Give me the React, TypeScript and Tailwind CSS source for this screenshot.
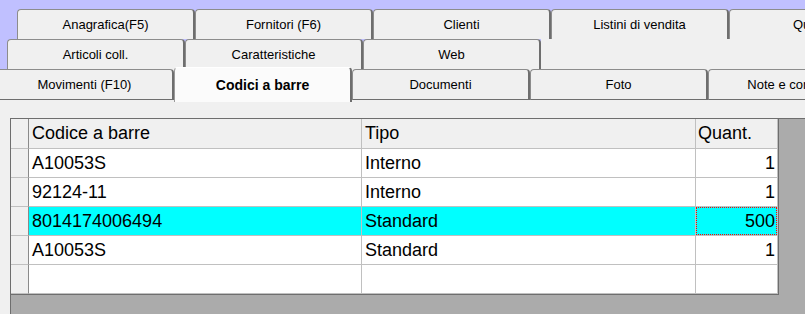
import React from 'react';

interface Riga {
  codice: string;
  tipo: string;
  quant: number;
  attiva?: boolean;
}

const RIGHE: Riga[] = [
  { codice: 'A10053S', tipo: 'Interno', quant: 1 },
  { codice: '92124-11', tipo: 'Interno', quant: 1 },
  { codice: '8014174006494', tipo: 'Standard', quant: 500, attiva: true },
  { codice: 'A10053S', tipo: 'Standard', quant: 1 },
];

const RIGA1 = ['Anagrafica(F5)', 'Fornitori (F6)', 'Clienti', 'Listini di vendita', 'Quantità'];
const RIGA2 = ['Articoli coll.', 'Caratteristiche', 'Web'];
const RIGA3 = ['Movimenti (F10)', 'Codici a barre', 'Documenti', 'Foto', 'Note e commenti'];

function Tab({ label, bottom }: { label: string; bottom?: boolean }) {
  return (
    <div
      className={
        'flex w-[178px] shrink-0 items-center justify-center rounded-t-[4px] border-t border-l border-r-2 border-t-[#8c8c8c] border-l-[#8c8c8c] border-r-[#6e6e6e] bg-[#f0f0f0] text-[13px] text-black ' +
        (bottom ? 'h-[31px] border-b border-b-[#6e6e6e]' : 'h-[30px]')
      }
    >
      <span className="whitespace-nowrap">{label}</span>
    </div>
  );
}

export default function App() {
  return (
    <div className="flex h-[314px] w-[805px] flex-col overflow-hidden bg-[#f0f0f0] font-['Liberation_Sans',Arial,sans-serif]">
      {/* Schede */}
      <div className="bg-[#c0c0ff] pt-[9px]">
        <div className="flex h-[30px] pl-[17px]">
          {RIGA1.map((t) => (
            <Tab key={t} label={t} />
          ))}
        </div>
        <div className="flex h-[30px] pl-[7px]">
          {RIGA2.map((t) => (
            <Tab key={t} label={t} />
          ))}
          <div className="h-[30px] flex-1 bg-[#f0f0f0]" />
        </div>
        <div className="-ml-[4px] flex h-[31px] bg-[#f0f0f0]">
          {RIGA3.map((t) =>
            t === 'Codici a barre' ? (
              <div
                key={t}
                className="relative z-10 -mt-[2px] flex h-[35px] w-[178px] shrink-0 items-start justify-center rounded-t-[4px] border-t border-l border-r-2 border-t-white border-l-[#9a9a9a] border-r-[#6e6e6e] bg-[#fbfbfb] pt-[7px] text-[14px] font-bold text-black"
              >
                {t}
              </div>
            ) : (
              <Tab key={t} label={t} bottom />
            ),
          )}
        </div>
      </div>

      {/* Griglia */}
      <div className="flex flex-1 pl-[10px] pt-[18px]">
        <div className="flex-1 border-t border-l border-[#6e6e6e] bg-[#ababab]">
          <div className="w-[768px] border-r border-b border-[#6e6e6e] text-[18px] text-black">
            <div className="flex h-[30px] bg-[#f0f0f0]">
              <div className="w-[18px] border-r border-b border-r-[#8a8a8a] border-b-[#c0c0c0]" />
              <div className="flex w-[333px] items-center border-r border-b border-[#c0c0c0] pl-[3px]">
                Codice a barre
              </div>
              <div className="flex w-[334px] items-center border-r border-b border-[#c0c0c0] pl-[3px]">
                Tipo
              </div>
              <div className="flex w-[82px] items-center border-r border-b border-[#c0c0c0] pl-[2px]">
                Quant.
              </div>
            </div>
            {[...RIGHE, null].map((r, i) => (
              <div key={i} className="flex h-[29px]">
                <div className="w-[18px] border-r border-b border-r-[#8a8a8a] border-b-[#c0c0c0] bg-[#f0f0f0]" />
                <div
                  className={
                    'flex w-[333px] items-center border-r border-b border-[#c0c0c0] pl-[3px] ' +
                    (r?.attiva ? 'bg-[#00ffff]' : 'bg-white')
                  }
                >
                  {r?.codice}
                </div>
                <div
                  className={
                    'flex w-[334px] items-center border-r border-b border-[#c0c0c0] pl-[3px] ' +
                    (r?.attiva ? 'bg-[#00ffff]' : 'bg-white')
                  }
                >
                  {r?.tipo}
                </div>
                <div
                  className={
                    'w-[82px] border-r border-b border-[#c0c0c0] ' +
                    (r?.attiva ? 'bg-[#00ffff]' : 'bg-white')
                  }
                >
                  <div
                    className={
                      'flex h-full items-center justify-end pr-[1px] ' +
                      (r?.attiva ? 'border border-dotted border-[#ff0000]' : 'pr-[2px]')
                    }
                  >
                    {r?.quant}
                  </div>
                </div>
              </div>
            ))}
          </div>
        </div>
      </div>
    </div>
  );
}
